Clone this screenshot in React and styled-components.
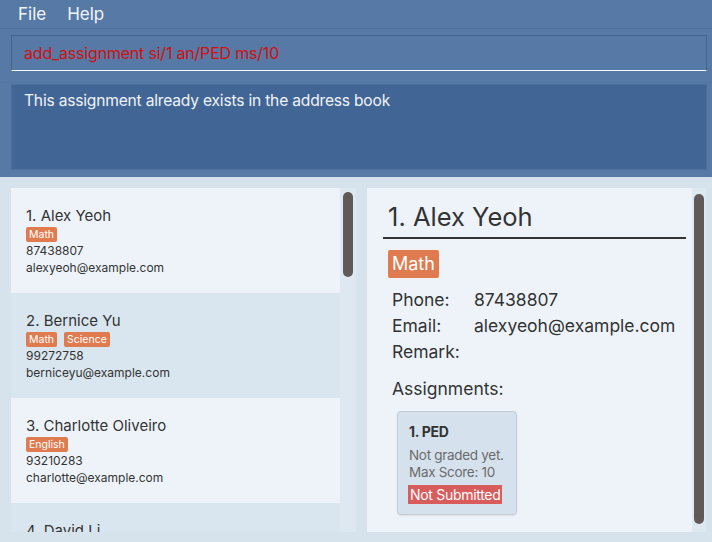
import React from 'react'
import styled, { createGlobalStyle } from 'styled-components'

const GlobalStyle = createGlobalStyle`
  html, body {
    margin: 0;
    padding: 0;
  }
  body {
    font-family: Inter, "Open Sans", "Liberation Sans", sans-serif;
  }
`

const persons = [
  { id: 1, name: 'Alex Yeoh', tags: ['Math'], phone: '87438807', email: 'alexyeoh@example.com' },
  { id: 2, name: 'Bernice Yu', tags: ['Math', 'Science'], phone: '99272758', email: 'berniceyu@example.com' },
  { id: 3, name: 'Charlotte Oliveiro', tags: ['English'], phone: '93210283', email: 'charlotte@example.com' },
  { id: 4, name: 'David Li', tags: ['Math'], phone: '91031282', email: 'lidavid@example.com' },
]

const Window = styled.div`
  width: 712px;
  height: 542px;
  display: flex;
  flex-direction: column;
  background: #5679a5;
  overflow: hidden;
`

const MenuBar = styled.div`
  height: 29px;
  display: flex;
  align-items: center;
  gap: 21px;
  padding-left: 18px;
  border-bottom: 1px solid #4e7099;
  box-sizing: border-box;
`

const MenuItem = styled.span`
  color: #f2f5fa;
  font-size: 17px;
`

const CommandArea = styled.div`
  padding: 6px 5px 0 11px;
`

const CommandBox = styled.div`
  height: 36px;
  display: flex;
  align-items: center;
  padding-left: 12px;
  border: 1px solid #45648b;
  border-bottom: 1px solid #f4f6fa;
  box-sizing: border-box;
  color: #d40f0f;
  font-size: 16px;
  letter-spacing: -0.2px;
`

const ResultArea = styled.div`
  margin-top: 11px;
  padding: 1px 5px 1px 11px;
  border-top: 1px solid #5077a2;
`

const ResultBox = styled.div`
  height: 86px;
  background: #416695;
  border: 1px solid #4b6f9c;
  box-sizing: border-box;
  padding: 6px 12px;
  color: #f0f3f8;
  font-size: 15.6px;
  letter-spacing: -0.2px;
`

const Lower = styled.div`
  flex: 1;
  margin-top: 6px;
  background: #d6e2ec;
  display: flex;
  padding: 11px 6px 10px 11px;
  gap: 11px;
  min-height: 0;
`

const ListPanel = styled.div`
  width: 345px;
  display: flex;
  background: #dde8f1;
  overflow: hidden;
`

const ListColumn = styled.div`
  width: 329px;
  display: flex;
  flex-direction: column;
`

const Card = styled.div`
  height: 105px;
  flex-shrink: 0;
  box-sizing: border-box;
  padding: 18px 15px 0;
  background: ${p => (p.$alt ? '#dae6ef' : '#eef3fa')};
  color: #333;
`

const CardName = styled.div`
  font-size: 15px;
  line-height: 20px;
`

const TagRow = styled.div`
  display: flex;
  gap: 7px;
  height: 16px;
  align-items: center;
`

const SmallTag = styled.span`
  background: #e07b50;
  color: #fff;
  font-size: 10.5px;
  line-height: 15px;
  padding: 0 3px;
  border-radius: 2px;
`

const CardLine = styled.div`
  font-size: 12px;
  line-height: 17px;
`

const Track = styled.div`
  flex: 1;
  position: relative;
  background: #dde8f1;
`

const Thumb = styled.div`
  position: absolute;
  left: ${p => p.$left}px;
  top: ${p => p.$top}px;
  width: 10px;
  height: ${p => p.$height}px;
  border-radius: 5px;
  background: #5f5a57;
`

const DetailPanel = styled.div`
  flex: 1;
  display: flex;
  background: #eef3fa;
`

const DetailBody = styled.div`
  width: 325px;
  padding: 14px 0 0 21px;
  box-sizing: border-box;
  color: #333;
`

const DetailName = styled.div`
  font-size: 25.5px;
  line-height: 30px;
  padding: 0 0 5px 5px;
  margin-left: -5px;
  width: 298px;
  border-bottom: 2px solid #333;
`

const BigTag = styled.span`
  display: inline-block;
  margin-top: 11px;
  background: #e07b50;
  color: #fff;
  font-size: 18px;
  line-height: 28px;
  padding: 0 4px;
  border-radius: 2px;
`

const InfoGrid = styled.div`
  display: grid;
  grid-template-columns: 82px auto;
  margin: 9px 0 0 4px;
  font-size: 17.5px;
  line-height: 26px;
`

const SectionTitle = styled.div`
  margin: 13px 0 0 4px;
  font-size: 17.5px;
  line-height: 22px;
`

const AssignmentCard = styled.div`
  width: 120px;
  height: 104px;
  margin: 11px 0 0 9px;
  box-sizing: border-box;
  padding: 10px 0 0 11px;
  background: #d5e2ed;
  border: 1px solid #c3ccd5;
  border-radius: 4px;
  box-shadow: 0 1px 2px rgba(0, 0, 0, 0.08);
`

const AssignmentTitle = styled.div`
  font-size: 14px;
  font-weight: 700;
  line-height: 20px;
  letter-spacing: -0.3px;
`

const AssignmentLine = styled.div`
  margin-top: ${p => (p.$first ? 5 : 0)}px;
  font-size: 13.5px;
  line-height: 17px;
  color: #6b6b6b;
  letter-spacing: -0.3px;
`

const StatusBadge = styled.span`
  display: inline-block;
  margin-top: 4px;
  margin-left: -1px;
  background: #d85c5c;
  color: #fff;
  font-size: 14px;
  line-height: 19px;
  padding: 0 2px;
  letter-spacing: -0.3px;
`

export default function App() {
  const person = persons[0]
  return (
    <>
      <GlobalStyle />
      <Window>
        <MenuBar>
          <MenuItem>File</MenuItem>
          <MenuItem>Help</MenuItem>
        </MenuBar>
        <CommandArea>
          <CommandBox>add_assignment si/1 an/PED ms/10</CommandBox>
        </CommandArea>
        <ResultArea>
          <ResultBox>This assignment already exists in the address book</ResultBox>
        </ResultArea>
        <Lower>
          <ListPanel>
            <ListColumn>
              {persons.map((p, i) => (
                <Card key={p.id} $alt={i % 2 === 1}>
                  <CardName>{p.id}. {p.name}</CardName>
                  <TagRow>
                    {p.tags.map(t => <SmallTag key={t}>{t}</SmallTag>)}
                  </TagRow>
                  <CardLine>{p.phone}</CardLine>
                  <CardLine>{p.email}</CardLine>
                </Card>
              ))}
            </ListColumn>
            <Track>
              <Thumb $left={3} $top={4} $height={85} />
            </Track>
          </ListPanel>
          <DetailPanel>
            <DetailBody>
              <DetailName>{person.id}. {person.name}</DetailName>
              <BigTag>Math</BigTag>
              <InfoGrid>
                <span>Phone:</span><span>{person.phone}</span>
                <span>Email:</span><span>{person.email}</span>
                <span>Remark:</span><span></span>
              </InfoGrid>
              <SectionTitle>Assignments:</SectionTitle>
              <AssignmentCard>
                <AssignmentTitle>1. PED</AssignmentTitle>
                <AssignmentLine $first>Not graded yet.</AssignmentLine>
                <AssignmentLine>Max Score: 10</AssignmentLine>
                <StatusBadge>Not Submitted</StatusBadge>
              </AssignmentCard>
            </DetailBody>
            <Track>
              <Thumb $left={2} $top={6} $height={330} />
            </Track>
          </DetailPanel>
        </Lower>
      </Window>
    </>
  )
}
